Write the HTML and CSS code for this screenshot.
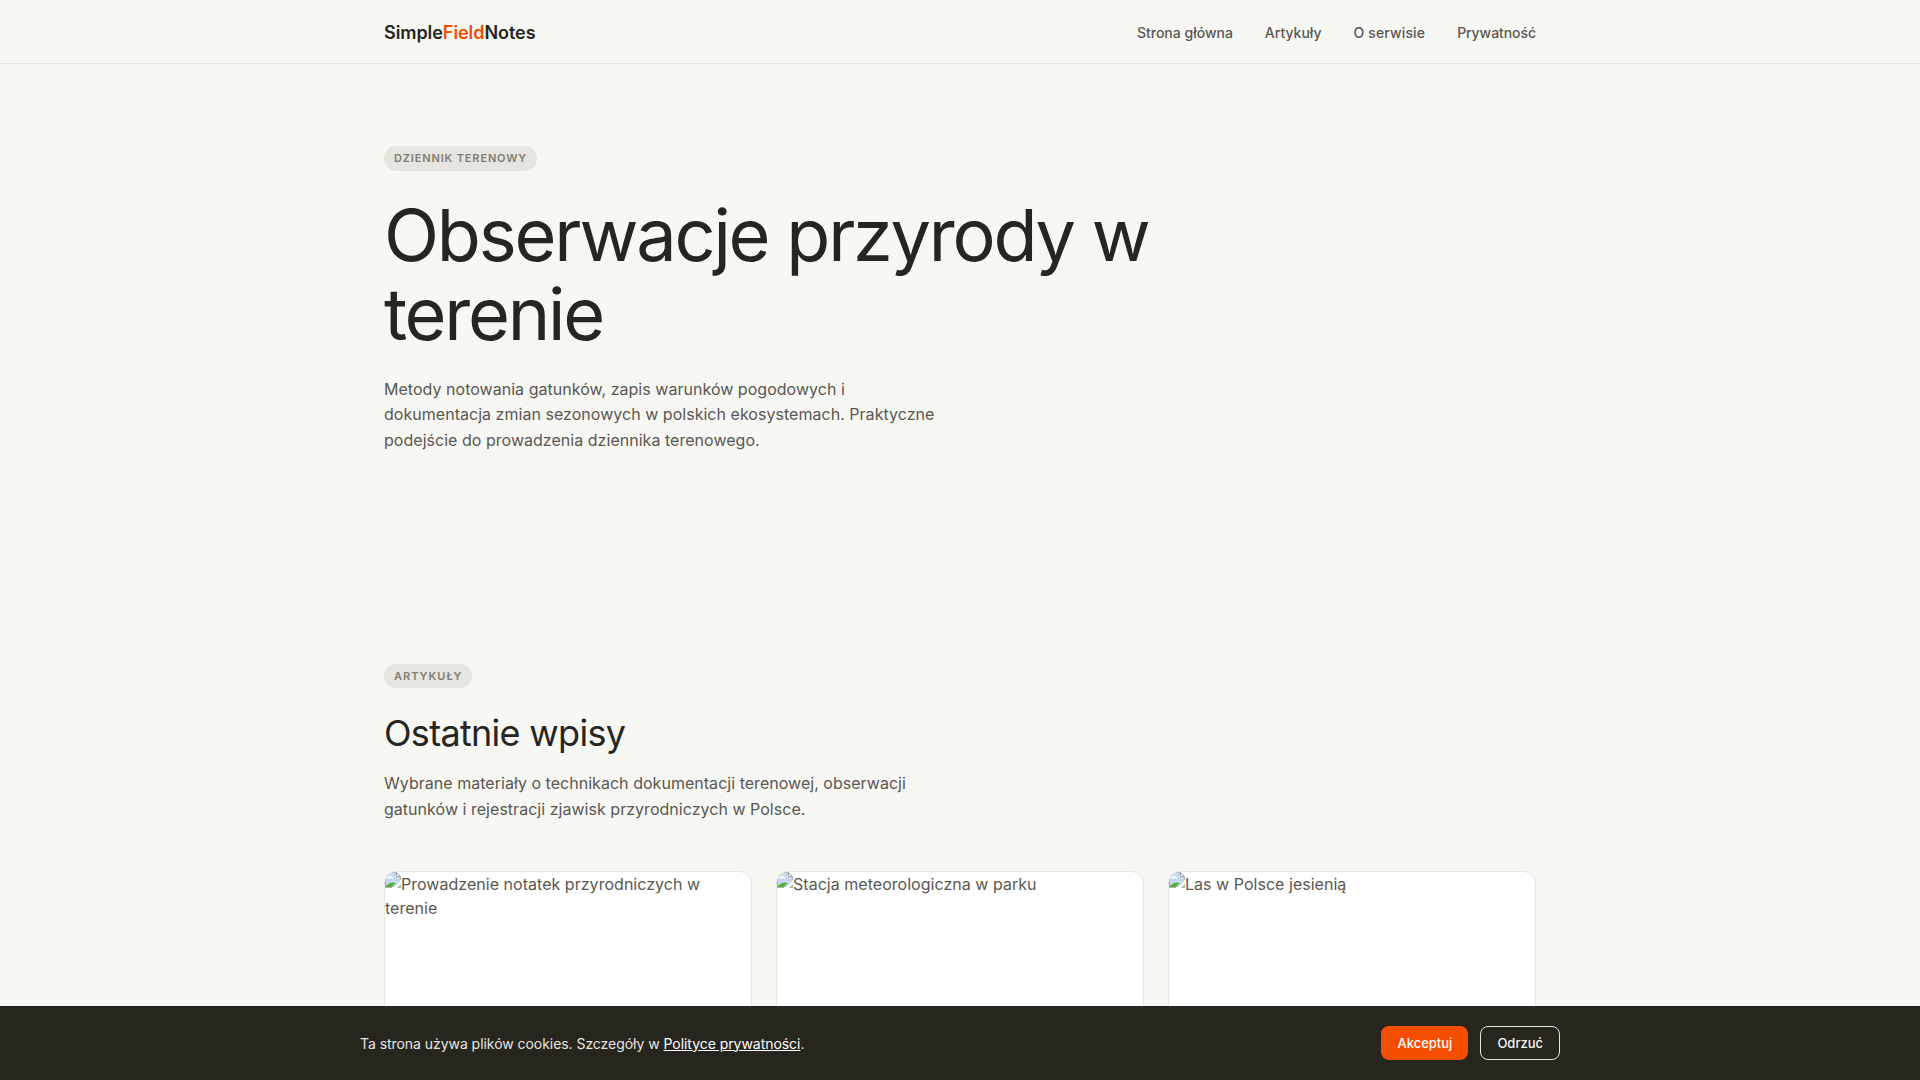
FILE: index.html
```
<!DOCTYPE html>
<html lang="pl">
<head>
<meta charset="utf-8">
<title>SimpleFieldNotes</title>
<link rel="stylesheet" href="styles.css">
</head>
<body>
<svg class="defs"><defs>
<symbol id="broken" viewBox="0 0 16 16">
<path d="M1 1h10v4h4v5l-5 5H1z" fill="#c7d8f5"/>
<path d="M2 6.500c0-1.500 1-2 1.800-1.700.5-1.600 2.900-1.500 3.200.1 1.300-.1 1.700.8 1.500 1.600z" fill="#fff"/>
<path d="M1 15v-1C3 11.800 5.500 10.500 8 10.500c1.200 0 2 .2 2.800.6L7 15z" fill="#55b035"/>
<path d="M.5 16V.5H11" fill="none" stroke="#b0b0b0"/>
<path d="M11.500 .5v4h4z" fill="#fff" stroke="#a0a0a0"/>
<path d="M15.500 4.500V8M0 15.500h7" stroke="#b0b0b0"/>
<path d="M16 8.500L8.500 16H12l4-4z" fill="#fff"/>
<path d="M16 12l-4 4h4z" fill="#9fbd96"/>
</symbol></defs></svg>
<header class="header"><div class="container header-inner">
<a class="logo" href="#">Simple<span>Field</span>Notes</a>
<nav class="nav"><a href="#">Strona główna</a><a href="#">Artykuły</a><a class="about" href="#">O serwisie</a><a class="privacy" href="#">Prywatność</a></nav>
</div></header>
<main>
<section class="hero"><div class="container">
<span class="tag">Dziennik terenowy</span>
<h1>Obserwacje przyrody w terenie</h1>
<p class="lead">Metody notowania gatunków, zapis warunków pogodowych i dokumentacja zmian sezonowych w polskich ekosystemach. Praktyczne podejście do prowadzenia dziennika terenowego.</p>
</div></section>
<section class="articles"><div class="container">
<span class="tag tag-wide">Artykuły</span>
<h2>Ostatnie wpisy</h2>
<p class="lead">Wybrane materiały o technikach dokumentacji terenowej, obserwacji gatunków i rejestracji zjawisk przyrodniczych w Polsce.</p>
<div class="grid">
<article class="card"><svg class="broken"><use href="#broken"/></svg>Prowadzenie notatek przyrodniczych w terenie</article>
<article class="card"><svg class="broken"><use href="#broken"/></svg>Stacja meteorologiczna w parku</article>
<article class="card"><svg class="broken"><use href="#broken"/></svg>Las w Polsce jesienią</article>
</div>
</div></section>
</main>
<aside class="cookies"><div class="cookies-inner">
<p>Ta strona używa plików cookies. Szczegóły w <a href="#">Polityce prywatności</a>.</p>
<div class="actions"><button class="btn accept">Akceptuj</button><button class="btn">Odrzuć</button></div>
</div></aside>
</body>
</html>
```
FILE: styles.css
```
* { box-sizing: border-box; margin: 0; padding: 0; }
html { overflow: hidden; }
body { height: 1080px; overflow: hidden; background: #f7f7f4; color: #26251e; font: 16px/1.6 Inter, sans-serif; }
a { color: inherit; text-decoration: none; }
.defs { display: block; width: 0; height: 0; }
.container { width: 1200px; margin: 0 auto; padding: 0 24px; }
.header { height: 64px; border-bottom: 1px solid #e6e5e0; }
.header-inner { height: 63px; padding-top: 3px; display: flex; align-items: center; justify-content: space-between; }
.logo { font-size: 18px; font-weight: 600; letter-spacing: -0.06px; }
.logo span { color: #f54e00; }
.nav { display: flex; gap: 32px; font-size: 14px; font-weight: 500; color: #5a5852; }
.about { letter-spacing: 0.14px; }
.privacy { letter-spacing: -0.06px; }
.hero { padding: 82px 0 120px; }
.tag { display: block; width: fit-content; padding: 4px 10px; border-radius: 99px; background: #e6e5e0; color: #807d72; font-size: 11px; font-weight: 600; line-height: 16.5px; letter-spacing: 0.85px; text-transform: uppercase; }
.tag-wide { letter-spacing: 1px; }
h1 { max-width: 800px; margin: 24px 0; font-size: 72px; font-weight: 400; line-height: 1.1; letter-spacing: -2.24px; }
h2 { margin: 24px 0 16px; font-size: 36px; font-weight: 400; line-height: 1.2; letter-spacing: -0.7px; }
.lead { max-width: 560px; color: #5a5852; letter-spacing: 0.03px; }
.articles { padding-top: 90px; }
.grid { display: grid; grid-template-columns: repeat(3, 1fr); gap: 24px; margin-top: 48px; }
.card { height: 200px; border: 1px solid #e6e5e0; border-radius: 12px; background: #fff; color: #5a5852; line-height: 24px; letter-spacing: 0.03px; overflow: hidden; }
.broken { float: left; width: 16px; height: 16px; }
.cookies { position: fixed; inset: auto 0 0; background: #26251e; color: #e6e5e0; padding: 20px 0; }
.cookies-inner { width: 1200px; margin: 0 auto; display: flex; align-items: center; justify-content: space-between; font-size: 14px; }
.cookies p { padding-top: 2px; letter-spacing: -0.05px; }
.cookies a { color: #fff; text-decoration: underline; }
.actions { display: flex; gap: 12px; }
.btn { height: 34px; padding: 0 16px; border: 1px solid #e6e5e0; border-radius: 8px; background: transparent; color: #f7f7f4; font: 500 13px Inter, sans-serif; }
.accept { border: 0; background: #f54e00; color: #fff; }
```
